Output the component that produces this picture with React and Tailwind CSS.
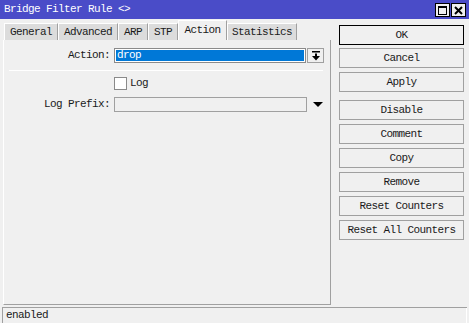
import React from "react";

const mono = { fontFamily: '"Liberation Mono", "DejaVu Sans Mono", monospace' };

function Btn({ children, primary, className = "" }) {
  return (
    <div
      className={`h-[20px] w-[125px] flex items-center justify-center bg-[#f0f0f0] text-[11px] tracking-[-0.6px] text-[#1a1a1a] ${
        primary ? "border border-black" : "border border-[#a0a0a0]"
      } ${className}`}
    >
      {children}
    </div>
  );
}

function Tab({ label, w, active }) {
  return (
    <div
      className={`flex items-center justify-center text-[11px] tracking-[-0.6px] text-[#1a1a1a] border-l border-l-white border-r border-r-[#a0a0a0] ${
        active ? "h-[20px] bg-[#f0f0f0] border-t border-t-white" : "h-[17px] bg-[#dcdcdc] border-t border-t-white"
      }`}
      style={{ width: w }}
    >
      {label}
    </div>
  );
}

export default function App() {
  return (
    <div className="w-[469px] h-[323px] bg-[#f0f0f0] flex flex-col overflow-hidden" style={mono}>
      {/* Title bar */}
      <div className="h-[19px] bg-[#4a4cc8] flex items-center justify-between pl-[4px] pr-[3px]">
        <span className="text-white text-[11px] tracking-[-0.6px] leading-none">Bridge Filter Rule &lt;&gt;</span>
        <div className="flex gap-[1px] mt-[1px]">
          <div className="w-[15px] h-[14px] bg-[#f0f0f0] border border-black flex items-center justify-center">
            <div className="w-[9px] h-[9px] border border-black border-t-2"></div>
          </div>
          <div className="w-[15px] h-[14px] bg-[#f0f0f0] border border-black flex items-center justify-center">
            <svg width="9" height="9" viewBox="0 0 9 9">
              <path d="M1 1 L8 8 M8 1 L1 8" stroke="black" strokeWidth="2" />
            </svg>
          </div>
        </div>
      </div>

      {/* Body */}
      <div className="flex flex-1">
        {/* Left: tabs + panel */}
        <div className="pl-[3px] pt-[2px] flex flex-col w-[331px]">
          <div className="flex items-end h-[19px] pl-[1px]">
            <Tab label="General" w={54} />
            <Tab label="Advanced" w={60} />
            <Tab label="ARP" w={30} />
            <Tab label="STP" w={30} />
            <Tab label="Action" w={49} active />
            <Tab label="Statistics" w={70} />
          </div>
          <div className="h-[265px] border-l border-l-white border-r border-r-[#a0a0a0] border-b border-b-[#a0a0a0] relative">
            {/* Action row */}
            <div className="flex items-center mt-[8px] h-[15px]">
              <div className="w-[110px] text-right pr-[4px] text-[11px] tracking-[-0.6px] text-[#1a1a1a]">Action:</div>
              <div className="w-[192px] h-[15px] border border-[#8a8a8a] bg-white p-[1px]">
                <div className="w-full h-full bg-[#0078d7] text-white text-[11px] tracking-[-0.6px] leading-[11px] pl-[1px]">drop</div>
              </div>
              <div className="ml-[1px] w-[17px] h-[15px] border border-[#a0a0a0] bg-[#f0f0f0] flex items-center justify-center">
                <svg width="8" height="10" viewBox="0 0 8 10">
                  <rect x="0" y="0" width="8" height="1.5" fill="black" />
                  <rect x="3" y="2.5" width="2" height="3" fill="black" />
                  <polygon points="0,5 8,5 4,9.5" fill="black" />
                </svg>
              </div>
            </div>
            {/* Separator */}
            <div className="ml-[5px] mt-[7px] w-[314px] h-[1px] bg-[#a0a0a0] border-b border-b-white"></div>
            {/* Log checkbox */}
            <div className="flex items-center mt-[6px] h-[13px] pl-[110px]">
              <div className="w-[13px] h-[13px] border border-[#8a8a8a] bg-white"></div>
              <span className="ml-[3px] text-[11px] tracking-[-0.6px] text-[#1a1a1a]">Log</span>
            </div>
            {/* Log Prefix */}
            <div className="flex items-center mt-[7px] h-[15px]">
              <div className="w-[110px] text-right pr-[4px] text-[11px] tracking-[-0.6px] text-[#1a1a1a]">Log Prefix:</div>
              <div className="w-[193px] h-[15px] border border-[#a0a0a0] bg-[#f0f0f0]"></div>
              <svg className="ml-[6px]" width="10" height="5" viewBox="0 0 10 5">
                <polygon points="0,0 10,0 5,5" fill="black" />
              </svg>
            </div>
          </div>
        </div>

        {/* Right buttons */}
        <div className="ml-[8px] pt-[6px] flex flex-col">
          <Btn primary>OK</Btn>
          <Btn className="mt-[3px]">Cancel</Btn>
          <Btn className="mt-[4px]">Apply</Btn>
          <Btn className="mt-[8px]">Disable</Btn>
          <Btn className="mt-[4px]">Comment</Btn>
          <Btn className="mt-[4px]">Copy</Btn>
          <Btn className="mt-[4px]">Remove</Btn>
          <Btn className="mt-[4px]">Reset Counters</Btn>
          <Btn className="mt-[4px]">Reset All Counters</Btn>
        </div>
      </div>

      {/* Status bar */}
      <div className="mx-[2px] w-[465px] h-[1px] bg-[#a0a0a0]"></div>
      <div className="ml-[2px] w-[465px] h-[15px] border-l border-l-[#a0a0a0] border-r border-r-white flex items-center pl-[3px]">
        <span className="text-[11px] tracking-[-0.6px] text-[#1a1a1a]">enabled</span>
      </div>
    </div>
  );
}
